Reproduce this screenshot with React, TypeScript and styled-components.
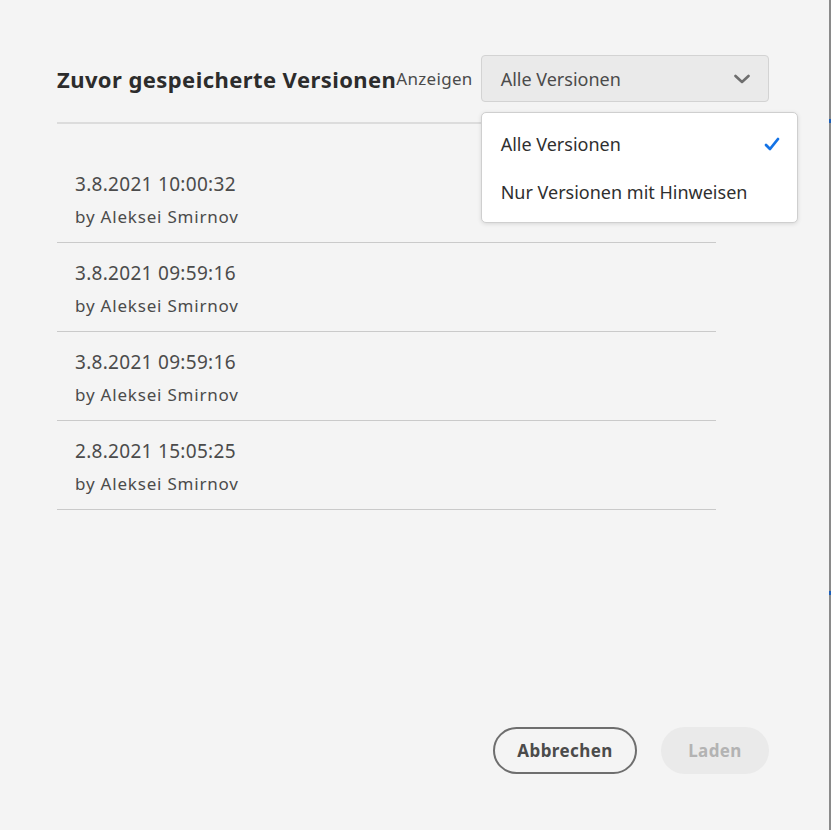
import React from "react";
import styled, { createGlobalStyle } from "styled-components";

const Global = createGlobalStyle`
  html, body { margin: 0; padding: 0; background: #f4f4f4; }
  body { font-family: "Noto Sans", sans-serif; }
  #root { height: 830px; }
`;

const Page = styled.div`
  display: flex;
  width: 831px;
  height: 830px;
`;

const Dialog = styled.div`
  flex: 1;
  background: #f4f4f4;
  padding: 55px 60px 0 57px;
  box-sizing: border-box;
  display: flex;
  flex-direction: column;
`;

const Edge = styled.div`
  width: 2px;
  background: linear-gradient(
    to bottom,
    #8a8a8a 0 119px,
    #1d5fb8 119px 123px,
    #8a8a8a 123px 591px,
    #1d5fb8 591px 595px,
    #8a8a8a 595px
  );
`;

const Header = styled.div`
  display: flex;
  align-items: center;
  height: 47px;
`;

const Title = styled.h2`
  margin: 0;
  font-size: 22px;
  letter-spacing: 0.42px;
  font-weight: 700;
  color: #2c2c2c;
  white-space: nowrap;
`;

const Label = styled.span`
  font-size: 17px;
  letter-spacing: 0.3px;
  color: #4b4b4b;
  margin-right: 8px;
  white-space: nowrap;
`;

const SelectWrap = styled.div`
  position: relative;
`;

const SelectButton = styled.div`
  width: 288px;
  height: 47px;
  box-sizing: border-box;
  background: #eaeaea;
  border: 1px solid #d3d3d3;
  border-radius: 4px;
  display: flex;
  align-items: center;
  justify-content: space-between;
  padding: 0 18px 0 19px;
  font-size: 18px;
  color: #4b4b4b;
`;

const Menu = styled.div`
  position: absolute;
  top: 57px;
  left: 0;
  width: 317px;
  box-sizing: border-box;
  background: #ffffff;
  border: 1px solid #cfcfcf;
  border-radius: 5px;
  box-shadow: 0 1px 4px rgba(0, 0, 0, 0.12);
  padding: 7px 0 6px;
  z-index: 2;
`;

const MenuItem = styled.div`
  height: 48px;
  display: flex;
  align-items: center;
  justify-content: space-between;
  padding: 0 17px 0 19px;
  font-size: 18px;
  color: #2f2f2f;
`;

const Divider = styled.div`
  height: 2px;
  background: #dcdcdc;
  margin-top: 20px;
  width: 712px;
`;

const List = styled.div`
  margin-top: 30px;
  width: 659px;
  display: flex;
  flex-direction: column;
`;

const Row = styled.div`
  height: 89px;
  box-sizing: border-box;
  border-bottom: 1px solid #cacaca;
  padding: 18px 0 0 18px;
  display: flex;
  flex-direction: column;
  gap: 9px;
  color: #4b4b4b;
`;

const DateText = styled.div`
  font-size: 19px;
  letter-spacing: 0.3px;
  line-height: 24px;
`;

const Author = styled.div`
  font-size: 17px;
  letter-spacing: 0.8px;
  line-height: 24px;
`;

const Footer = styled.div`
  margin-top: auto;
  margin-bottom: 56px;
  display: flex;
  justify-content: flex-end;
  gap: 24px;
`;

const Button = styled.button<{ $variant: "outline" | "disabled" }>`
  height: 47px;
  border-radius: 24px;
  box-sizing: border-box;
  font-family: inherit;
  font-size: 17px;
  letter-spacing: 0.4px;
  font-weight: 700;
  padding: 0 20px;
  ${(p) =>
    p.$variant === "outline"
      ? `background: transparent; border: 2px solid #6e6e6e; color: #4b4b4b; min-width: 144px;`
      : `background: #eaeaea; border: none; color: #b3b3b3; min-width: 108px;`}
`;

const Chevron = () => (
  <svg width="16" height="10" viewBox="0 0 16 10">
    <path d="M1.5 2 L8 8 L14.5 2" fill="none" stroke="#6e6e6e" strokeWidth="2.6" strokeLinecap="round" strokeLinejoin="round" />
  </svg>
);

const Check = () => (
  <svg width="16" height="14" viewBox="0 0 16 14">
    <path d="M2 8 L6 12 L14 2" fill="none" stroke="#1473e6" strokeWidth="2.8" strokeLinecap="round" strokeLinejoin="round" />
  </svg>
);

const versions = [
  "3.8.2021 10:00:32",
  "3.8.2021 09:59:16",
  "3.8.2021 09:59:16",
  "2.8.2021 15:05:25",
];

export default function App() {
  return (
    <Page>
      <Global />
      <Dialog>
        <Header>
          <Title>Zuvor gespeicherte Versionen</Title>
          <Label>Anzeigen</Label>
          <SelectWrap>
            <SelectButton>
              <span>Alle Versionen</span>
              <Chevron />
            </SelectButton>
            <Menu>
              <MenuItem>
                <span>Alle Versionen</span>
                <Check />
              </MenuItem>
              <MenuItem>
                <span>Nur Versionen mit Hinweisen</span>
              </MenuItem>
            </Menu>
          </SelectWrap>
        </Header>
        <Divider />
        <List>
          {versions.map((v, i) => (
            <Row key={i}>
              <DateText>{v}</DateText>
              <Author>by Aleksei Smirnov</Author>
            </Row>
          ))}
        </List>
        <Footer>
          <Button $variant="outline">Abbrechen</Button>
          <Button $variant="disabled">Laden</Button>
        </Footer>
      </Dialog>
      <Edge />
    </Page>
  );
}
